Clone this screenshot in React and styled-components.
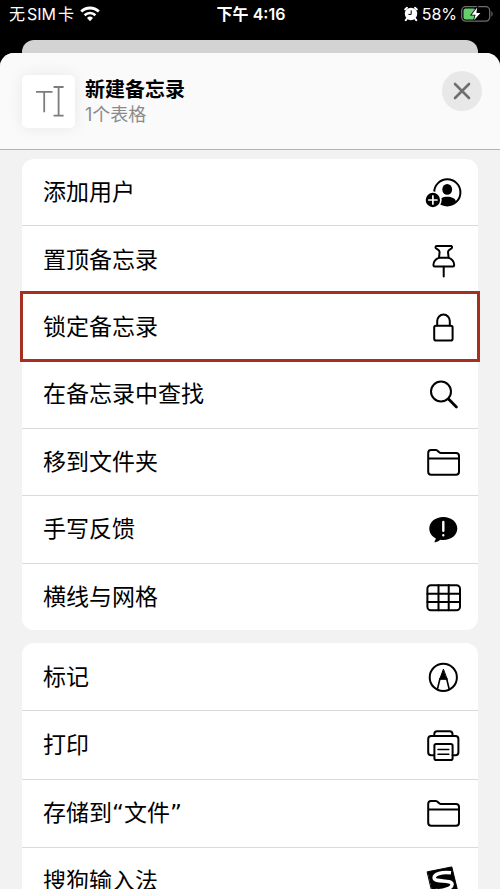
import React from "react";
import styled, { createGlobalStyle, css } from "styled-components";

function App() {
  return (
    <Screen>
      <GlobalStyle />
      <StatusBar>
        <Carrier>
          无<span>SIM</span>卡
          <WifiIcon />
        </Carrier>
        <Clock>下午 4:16</Clock>
        <Power>
          <AlarmIcon />
          58%
          <BatteryIcon />
        </Power>
      </StatusBar>
      <BackSheet />
      <Sheet>
        <Header>
          <Thumb>
            <TextCursorIcon />
          </Thumb>
          <Heading>
            <Title>新建备忘录</Title>
            <Subtitle>1个表格</Subtitle>
          </Heading>
          <CloseButton aria-label="关闭">
            <CloseIcon />
          </CloseButton>
        </Header>
        <Content>
          <Card $minHeight={471}>
            <Row label="添加用户" icon={<AddPersonIcon />} />
            <Row label="置顶备忘录" icon={<PinIcon />} />
            <Row label="锁定备忘录" icon={<LockIcon />} highlight />
            <Row label="在备忘录中查找" icon={<SearchIcon />} />
            <Row label="移到文件夹" icon={<FolderIcon />} />
            <Row label="手写反馈" icon={<FeedbackIcon />} />
            <Row label="横线与网格" icon={<GridIcon />} />
          </Card>
          <Card $minHeight={272}>
            <Row label="标记" icon={<MarkupIcon />} />
            <Row label="打印" icon={<PrinterIcon />} />
            <Row label="存储到“文件”" icon={<FolderIcon />} />
            <Row label="搜狗输入法" icon={<SogouIcon />} />
          </Card>
        </Content>
      </Sheet>
    </Screen>
  );
}

function Row({ label, icon, highlight }) {
  return (
    <Item $highlight={highlight}>
      <RowButton>
        {label}
        {icon}
      </RowButton>
    </Item>
  );
}

const WifiIcon = () => (
  <svg width="20" height="16" viewBox="0 0 20 16" fill="none" stroke="#fff">
    <path d="M1.2 5.6a12.6 12.6 0 0 1 17.6 0" strokeWidth="2.8" />
    <path d="M4.6 9.2a7.8 7.8 0 0 1 10.8 0" strokeWidth="2.6" />
    <path d="M10 15.2l-3-3.2a4.4 4.4 0 0 1 6 0z" fill="#fff" stroke="none" />
  </svg>
);

const AlarmIcon = () => (
  <svg width="14" height="16" viewBox="0 0 14 16">
    <circle cx="7" cy="8" r="6.2" fill="#fff" />
    <path
      d="M1.2 3.4L3 1.8M12.8 3.4L11 1.8M3 12.5L1.8 14.2M11 12.5l1.2 1.7"
      stroke="#fff"
      strokeWidth="2"
      strokeLinecap="round"
    />
    <path d="M7.2 4.4v4H4.4" fill="none" stroke="#000" strokeWidth="1" />
  </svg>
);

const BatteryIcon = () => (
  <svg width="32" height="16" viewBox="0 0 32 16">
    <rect x="0.7" y="0.7" width="28" height="14.4" rx="4" fill="none" stroke="#6e6e6e" strokeWidth="1.3" />
    <path d="M30.4 5.2c1.6.8 1.6 4.6 0 5.4z" fill="#6e6e6e" />
    <rect x="2.5" y="2.5" width="12" height="11" rx="2" fill="#65cf6b" />
    <path
      d="M16.2 1.6L10.6 8.8h4L13 14.2l6.4-7.2h-4z"
      fill="#fff"
      stroke="#000"
      strokeWidth="1.6"
      paintOrder="stroke"
    />
  </svg>
);

const TextCursorIcon = () => (
  <svg width="32" height="32" viewBox="0 0 32 32" fill="none" stroke="#7c7c7c" strokeWidth="1.8">
    <path d="M3 6.8h16.5M11.2 6.8v20.4M20.6 2h10M20.6 30.6h10M25.6 2v28.6" />
  </svg>
);

const CloseIcon = () => (
  <svg width="18" height="18" viewBox="0 0 18 18" stroke="#6f6f72" strokeWidth="2.6" strokeLinecap="round">
    <path d="M2 2l14 14M16 2L2 16" />
  </svg>
);

const RowIcon = ({ children }) => (
  <svg
    width="36"
    height="36"
    viewBox="0 0 36 36"
    fill="none"
    stroke="#000"
    strokeWidth="2"
    strokeLinecap="round"
    strokeLinejoin="round"
    overflow="visible"
    aria-hidden="true"
  >
    {children}
  </svg>
);

const AddPersonIcon = () => (
  <RowIcon>
    <circle cx="22.3" cy="18.4" r="13.1" />
    <ellipse cx="22.2" cy="15.4" rx="4.9" ry="5.4" fill="#000" stroke="none" />
    <path
      d="M13.6 27.4c.8-3 4.2-4.6 8.7-4.6s7.9 1.6 8.7 4.6c-2 2.6-5.2 4.1-8.7 4.1s-6.7-1.5-8.7-4.1z"
      fill="#000"
      stroke="none"
    />
    <circle cx="7.9" cy="26" r="8.8" fill="#fff" stroke="none" />
    <circle cx="7.9" cy="26" r="7.2" fill="#000" stroke="none" />
    <path d="M3.8 26H12M7.9 21.9v8.2" stroke="#fff" strokeWidth="1.7" />
  </RowIcon>
);

const PinIcon = () => (
  <RowIcon>
    <path d="M11.2 3.9h15q1.6 1.2.2 2.6c-1.8 1.2-3.4 1.8-3.4 3.5l.6 5.6c3.6 1.6 5.6 4.4 5.6 7.4q0 1.5-1.4 1.5H9.8q-1.4 0-1.4-1.5c0-3 2-5.8 5.6-7.4l.6-5.6c0-1.7-1.6-2.3-3.4-3.5q-1.4-1.4 0-2.6z" />
    <path d="M14 15.7h9.5M18.7 24.7v9.7" />
  </RowIcon>
);

const LockIcon = () => (
  <RowIcon>
    <rect x="9.2" y="16.8" width="18.4" height="14.8" rx="1.8" />
    <path d="M12.2 16.5v-4.4a6.3 6.6 0 0 1 12.6 0v4.4" />
  </RowIcon>
);

const SearchIcon = () => (
  <RowIcon>
    <circle cx="16" cy="15.5" r="10" />
    <path d="M23.8 23.3l7.6 7.6" strokeWidth="2.8" />
  </RowIcon>
);

const FolderIcon = () => (
  <RowIcon>
    <path d="M3.2 9q0-2.9 2.9-2.9h4.8c2.2 0 2.6 2.8 4.8 2.8H31q3 0 3 3v15.9q0 3-3 3H6.2q-3 0-3-3zM3.2 14.5H34" />
  </RowIcon>
);

const FeedbackIcon = () => (
  <RowIcon>
    <path
      d="M18.3 6c8 0 14 5 14 11.5s-6 11.5-14 11.5c-1 0-2-.1-3-.3-1.7 1.6-3.6 2.4-5.4 2.5-.5 0-.6-.4-.3-.8.8-1 1.2-2 1.1-3.1C6.7 25.3 4.3 21.8 4.3 17.5 4.3 11 10.3 6 18.3 6z"
      fill="#000"
      stroke="none"
    />
    <path d="M18.3 11v8.8M18.3 24.2v.1" stroke="#fff" strokeWidth="2.4" />
  </RowIcon>
);

const GridIcon = () => (
  <RowIcon>
    <rect x="2.4" y="6.2" width="32.6" height="25" rx="3.5" />
    <path d="M13.5 6.2v25M23.7 6.2v25M2.4 14.7H35M2.4 22.9H35" />
  </RowIcon>
);

const MarkupIcon = () => (
  <RowIcon>
    <circle cx="18.3" cy="18.4" r="13.6" />
    <path d="M18.3 10.5l-3.6 9.8h7.2z" fill="#000" strokeWidth="1" />
    <path d="M15 19.5l-2.6 10.8M21.6 19.5l2.6 10.8" strokeWidth="1.6" />
  </RowIcon>
);

const PrinterIcon = () => (
  <RowIcon>
    <path d="M9.3 8.6V7q0-2.8 2.8-2.8h12.6q2.8 0 2.8 2.8v1.6" />
    <path d="M9 28.2H6.2q-3 0-3-3V11.9q0-3 3-3h24.2q3 0 3 3v13.3q0 3-3 3h-2.8" />
    <rect x="9.4" y="17" width="18.2" height="16" rx="1.8" />
    <path d="M13 22.5h10.8M13 27.2h10.8" strokeWidth="1.6" />
  </RowIcon>
);

const SogouIcon = () => (
  <RowIcon>
    <path d="M2.5 8.8L26.8 3.9l6 24.5-24.5 5z" fill="#000" strokeWidth="1" />
    <path
      d="M26 9.8C17 8.6 8.8 11 9.2 15c.5 4.6 17 1.4 17.8 6 .5 3.6-7.6 7.6-16.4 6.6"
      stroke="#fff"
      strokeWidth="3.6"
      strokeLinecap="butt"
    />
  </RowIcon>
);

const GlobalStyle = createGlobalStyle`
  * {
    box-sizing: border-box;
  }

  body {
    margin: 0;
    background-color: black;
    font-family: Inter, "Noto Sans CJK SC", sans-serif;
  }

  svg {
    flex-shrink: 0;
  }

  button {
    border: none;
    padding: 0;
    font-family: inherit;
    color: inherit;
    cursor: pointer;
  }
`;

const Screen = styled.div`
  display: flex;
  flex-direction: column;
  height: 100vh;
  overflow: hidden;
`;

const StatusBar = styled.div`
  display: grid;
  grid-template-columns: 1fr auto 1fr;
  align-items: center;
  height: 40px;
  padding: 0 7px 12px 9px;
  color: white;
  font-size: 16px;
  line-height: 20px;
`;

const Carrier = styled.div`
  display: flex;
  align-items: center;

  span {
    margin: 0 2px;
  }

  svg {
    margin-left: 6px;
  }
`;

const Clock = styled.div`
  font-weight: 600;
`;

const Power = styled.div`
  display: flex;
  align-items: center;
  justify-content: flex-end;
  gap: 4px;
`;

const BackSheet = styled.div`
  flex-shrink: 0;
  height: 13px;
  margin: 0 22px;
  border-radius: 12px 12px 0 0;
  background-color: #d3d3d4;
`;

const Sheet = styled.main`
  flex: 1;
  min-height: 0;
  display: flex;
  flex-direction: column;
  border-radius: 14px 14px 0 0;
  overflow: hidden;
  background-color: #f2f2f2;
`;

const Header = styled.header`
  display: flex;
  align-items: center;
  flex-shrink: 0;
  height: 97px;
  padding: 0 18px 0 22px;
  background-color: #fafafa;
  border-bottom: 1px solid #b4b4b4;
`;

const Thumb = styled.div`
  display: flex;
  align-items: center;
  justify-content: center;
  width: 53px;
  height: 53px;
  border-radius: 5px;
  background-color: white;
  box-shadow: 0 0 16px rgba(0, 0, 0, 0.08);
`;

const Heading = styled.div`
  flex: 1;
  margin-left: 10px;
`;

const Title = styled.h1`
  margin: 0;
  padding-top: 2px;
  font-size: 20px;
  font-weight: 600;
  line-height: 26px;
`;

const Subtitle = styled.p`
  margin: 0;
  color: #8a8a8d;
  font-size: 18px;
  line-height: 24px;
`;

const CloseButton = styled.button`
  display: flex;
  align-items: center;
  justify-content: center;
  align-self: flex-start;
  width: 40px;
  height: 40px;
  margin-top: 18px;
  border-radius: 50%;
  background-color: #e8e8e9;
`;

const Content = styled.div`
  flex: 1;
  min-height: 0;
  display: flex;
  flex-direction: column;
  gap: 13px;
  padding: 9px 22px;
  overflow-y: auto;
  scrollbar-width: none;
`;

const Card = styled.ul`
  display: flex;
  flex-direction: column;
  flex-shrink: 0;
  min-height: ${(props) => props.$minHeight}px;
  margin: 0;
  padding: 0;
  list-style: none;
  border-radius: 12px;
  background-color: white;
`;

const Item = styled.li`
  position: relative;
  flex: 1;
  display: flex;
  border-bottom: 1px solid #dadada;

  &:last-child {
    border-bottom: none;
  }

  ${(props) =>
    props.$highlight &&
    css`
      &::after {
        content: "";
        position: absolute;
        inset: -3px -2px -2px;
        border: 3px solid #a5301f;
        pointer-events: none;
      }
    `}
`;

const RowButton = styled.button`
  flex: 1;
  display: flex;
  align-items: center;
  justify-content: space-between;
  padding: 0 17px 0 21px;
  background: none;
  font-family: "DejaVu Sans", "Noto Sans CJK SC", sans-serif;
  font-size: 23px;
  line-height: 32px;
  text-align: left;
`;

export default App;
